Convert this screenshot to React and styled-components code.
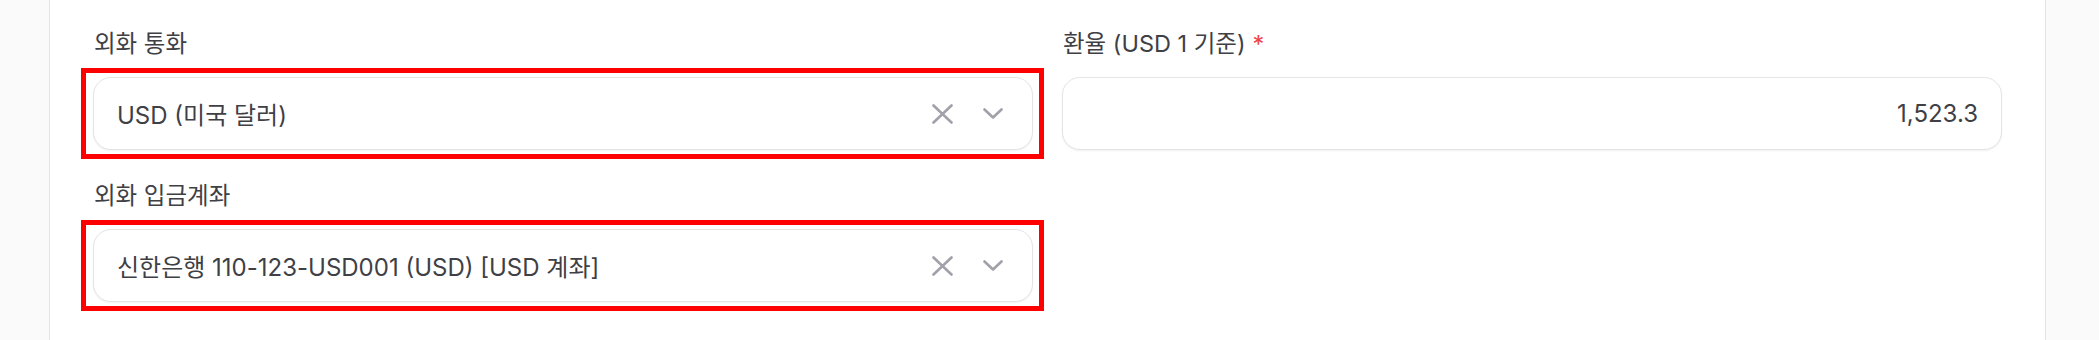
import styled, { createGlobalStyle } from "styled-components";

const GlobalStyle = createGlobalStyle`
  html, body {
    margin: 0;
    padding: 0;
    background: #fafafa;
  }
  body {
    font-family: "Inter", "Noto Sans CJK KR", sans-serif;
    color: #3f3f46;
  }
`;

const Page = styled.div`
  display: flex;
  height: 340px;
  padding: 0 53px 0 49px;
  overflow: hidden;
`;

const Panel = styled.div`
  flex: 1;
  background: #fff;
  border-left: 1px solid #e4e4e7;
  border-right: 1px solid #e4e4e7;
  padding: 28px 42px 0 43px;
`;

const Grid = styled.div`
  display: grid;
  grid-template-columns: 940px 940px;
  column-gap: 29px;
  row-gap: 30px;
`;

const Field = styled.div`
  display: flex;
  flex-direction: column;
`;

const Label = styled.label`
  font-size: 23.5px;
  line-height: 32px;
  color: #3f3f46;
  margin-bottom: 17px;
  padding-left: 1px;
`;

const Required = styled.span`
  color: #ef4444;
  margin-left: 7px;
`;

const Highlight = styled.div`
  border: 5px solid #ff0000;
  padding: 4px 6px 4px 7px;
  margin: -9px -11px -9px -12px;
`;

const Control = styled.div`
  height: 73px;
  box-sizing: border-box;
  border: 1px solid #e4e4e7;
  border-radius: 18px;
  background: #fff;
  box-shadow: 0 1px 2px rgba(0, 0, 0, 0.06);
  display: flex;
  align-items: center;
  padding-left: 23px;
  justify-content: ${(p) => (p.right ? "flex-end" : "flex-start")};
  padding-right: ${(p) => (p.right ? "23px" : "29px")};
`;

const Value = styled.span`
  flex: ${(p) => (p.right ? "0 0 auto" : "1")};
  font-size: 24px;
  color: #3f3f46;
  white-space: nowrap;
`;

const Indicators = styled.div`
  display: flex;
  align-items: center;
  gap: 30px;
`;

const ClearIcon = () => (
  <svg width="21" height="20" viewBox="0 0 21 20" fill="none">
    <path
      d="M1.5 1.5L19.5 18.5M19.5 1.5L1.5 18.5"
      stroke="#a1a1aa"
      strokeWidth="2.6"
      strokeLinecap="round"
    />
  </svg>
);

const ChevronIcon = () => (
  <svg width="20" height="11" viewBox="0 0 20 11" fill="none">
    <path
      d="M1.5 1.5L10 9.5L18.5 1.5"
      stroke="#a1a1aa"
      strokeWidth="2.6"
      strokeLinecap="round"
      strokeLinejoin="round"
    />
  </svg>
);

function SelectBox({ value }) {
  return (
    <Highlight>
      <Control>
        <Value>{value}</Value>
        <Indicators>
          <ClearIcon />
          <ChevronIcon />
        </Indicators>
      </Control>
    </Highlight>
  );
}

export default function App() {
  return (
    <>
      <GlobalStyle />
      <Page>
        <Panel>
          <Grid>
            <Field>
              <Label>외화 통화</Label>
              <SelectBox value="USD (미국 달러)" />
            </Field>
            <Field>
              <Label>
                환율 (USD 1 기준)<Required>*</Required>
              </Label>
              <Control right>
                <Value right>1,523.3</Value>
              </Control>
            </Field>
            <Field>
              <Label>외화 입금계좌</Label>
              <SelectBox value="신한은행 110-123-USD001 (USD) [USD 계좌]" />
            </Field>
          </Grid>
        </Panel>
      </Page>
    </>
  );
}
